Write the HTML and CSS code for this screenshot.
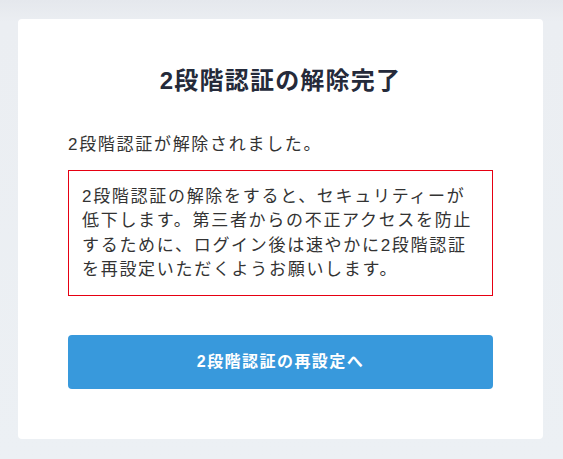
FILE: index.html
```html
<!DOCTYPE html>
<html lang="ja">
<head>
  <meta charset="UTF-8" />
  <meta name="viewport" content="width=device-width, initial-scale=1.0"/>
  <title>2段階認証の解除完了</title>
  <link rel="stylesheet" href="styles.css">
</head>
<body>
  <div class="page">
    <div class="card">
      <h1 class="card-title">2段階認証の解除完了</h1>
      <p class="message">2段階認証が解除されました。</p>
      <div class="notice">
        2段階認証の解除をすると、セキュリティーが低下します。第三者からの不正アクセスを防止するために、ログイン後は速やかに2段階認証を再設定いただくようお願いします。
      </div>
      <a href="#" class="btn-primary">2段階認証の再設定へ</a>
    </div>
  </div>
</body>
</html>
```

FILE: styles.css
```css
body {
  margin: 0;
  padding: 0;
  font-family: "Liberation Sans", "Noto Sans CJK JP", sans-serif;
  background: linear-gradient(#e5e8ed, #ebeef2 22px, #ecf0f4);
  color: #333;
  min-height: 459px;
}

.page {
  padding: 19px 20px 21px 18px;
}

.card {
  background: #fff;
  border-radius: 4px;
  padding: 50px 50px 50px;
}

.card-title {
  margin: 0;
  font-size: 24px;
  line-height: 24px;
  font-weight: bold;
  letter-spacing: 0.05em;
  text-align: center;
  color: #252a3a;
}

.message {
  margin: 40px 0 12px;
  font-size: 17px;
  line-height: 24.5px;
  letter-spacing: 0.1em;
}

.notice {
  border: 1px solid #e60012;
  padding: 14px 13px 12px;
  font-size: 17px;
  line-height: 24.5px;
  letter-spacing: 0.1em;
}

.btn-primary {
  display: block;
  margin-top: 39px;
  height: 54px;
  line-height: 54px;
  background-color: #3899dc;
  color: #fff;
  text-align: center;
  text-decoration: none;
  font-size: 16px;
  font-weight: bold;
  letter-spacing: 0.09em;
  border-radius: 4px;
}
```
